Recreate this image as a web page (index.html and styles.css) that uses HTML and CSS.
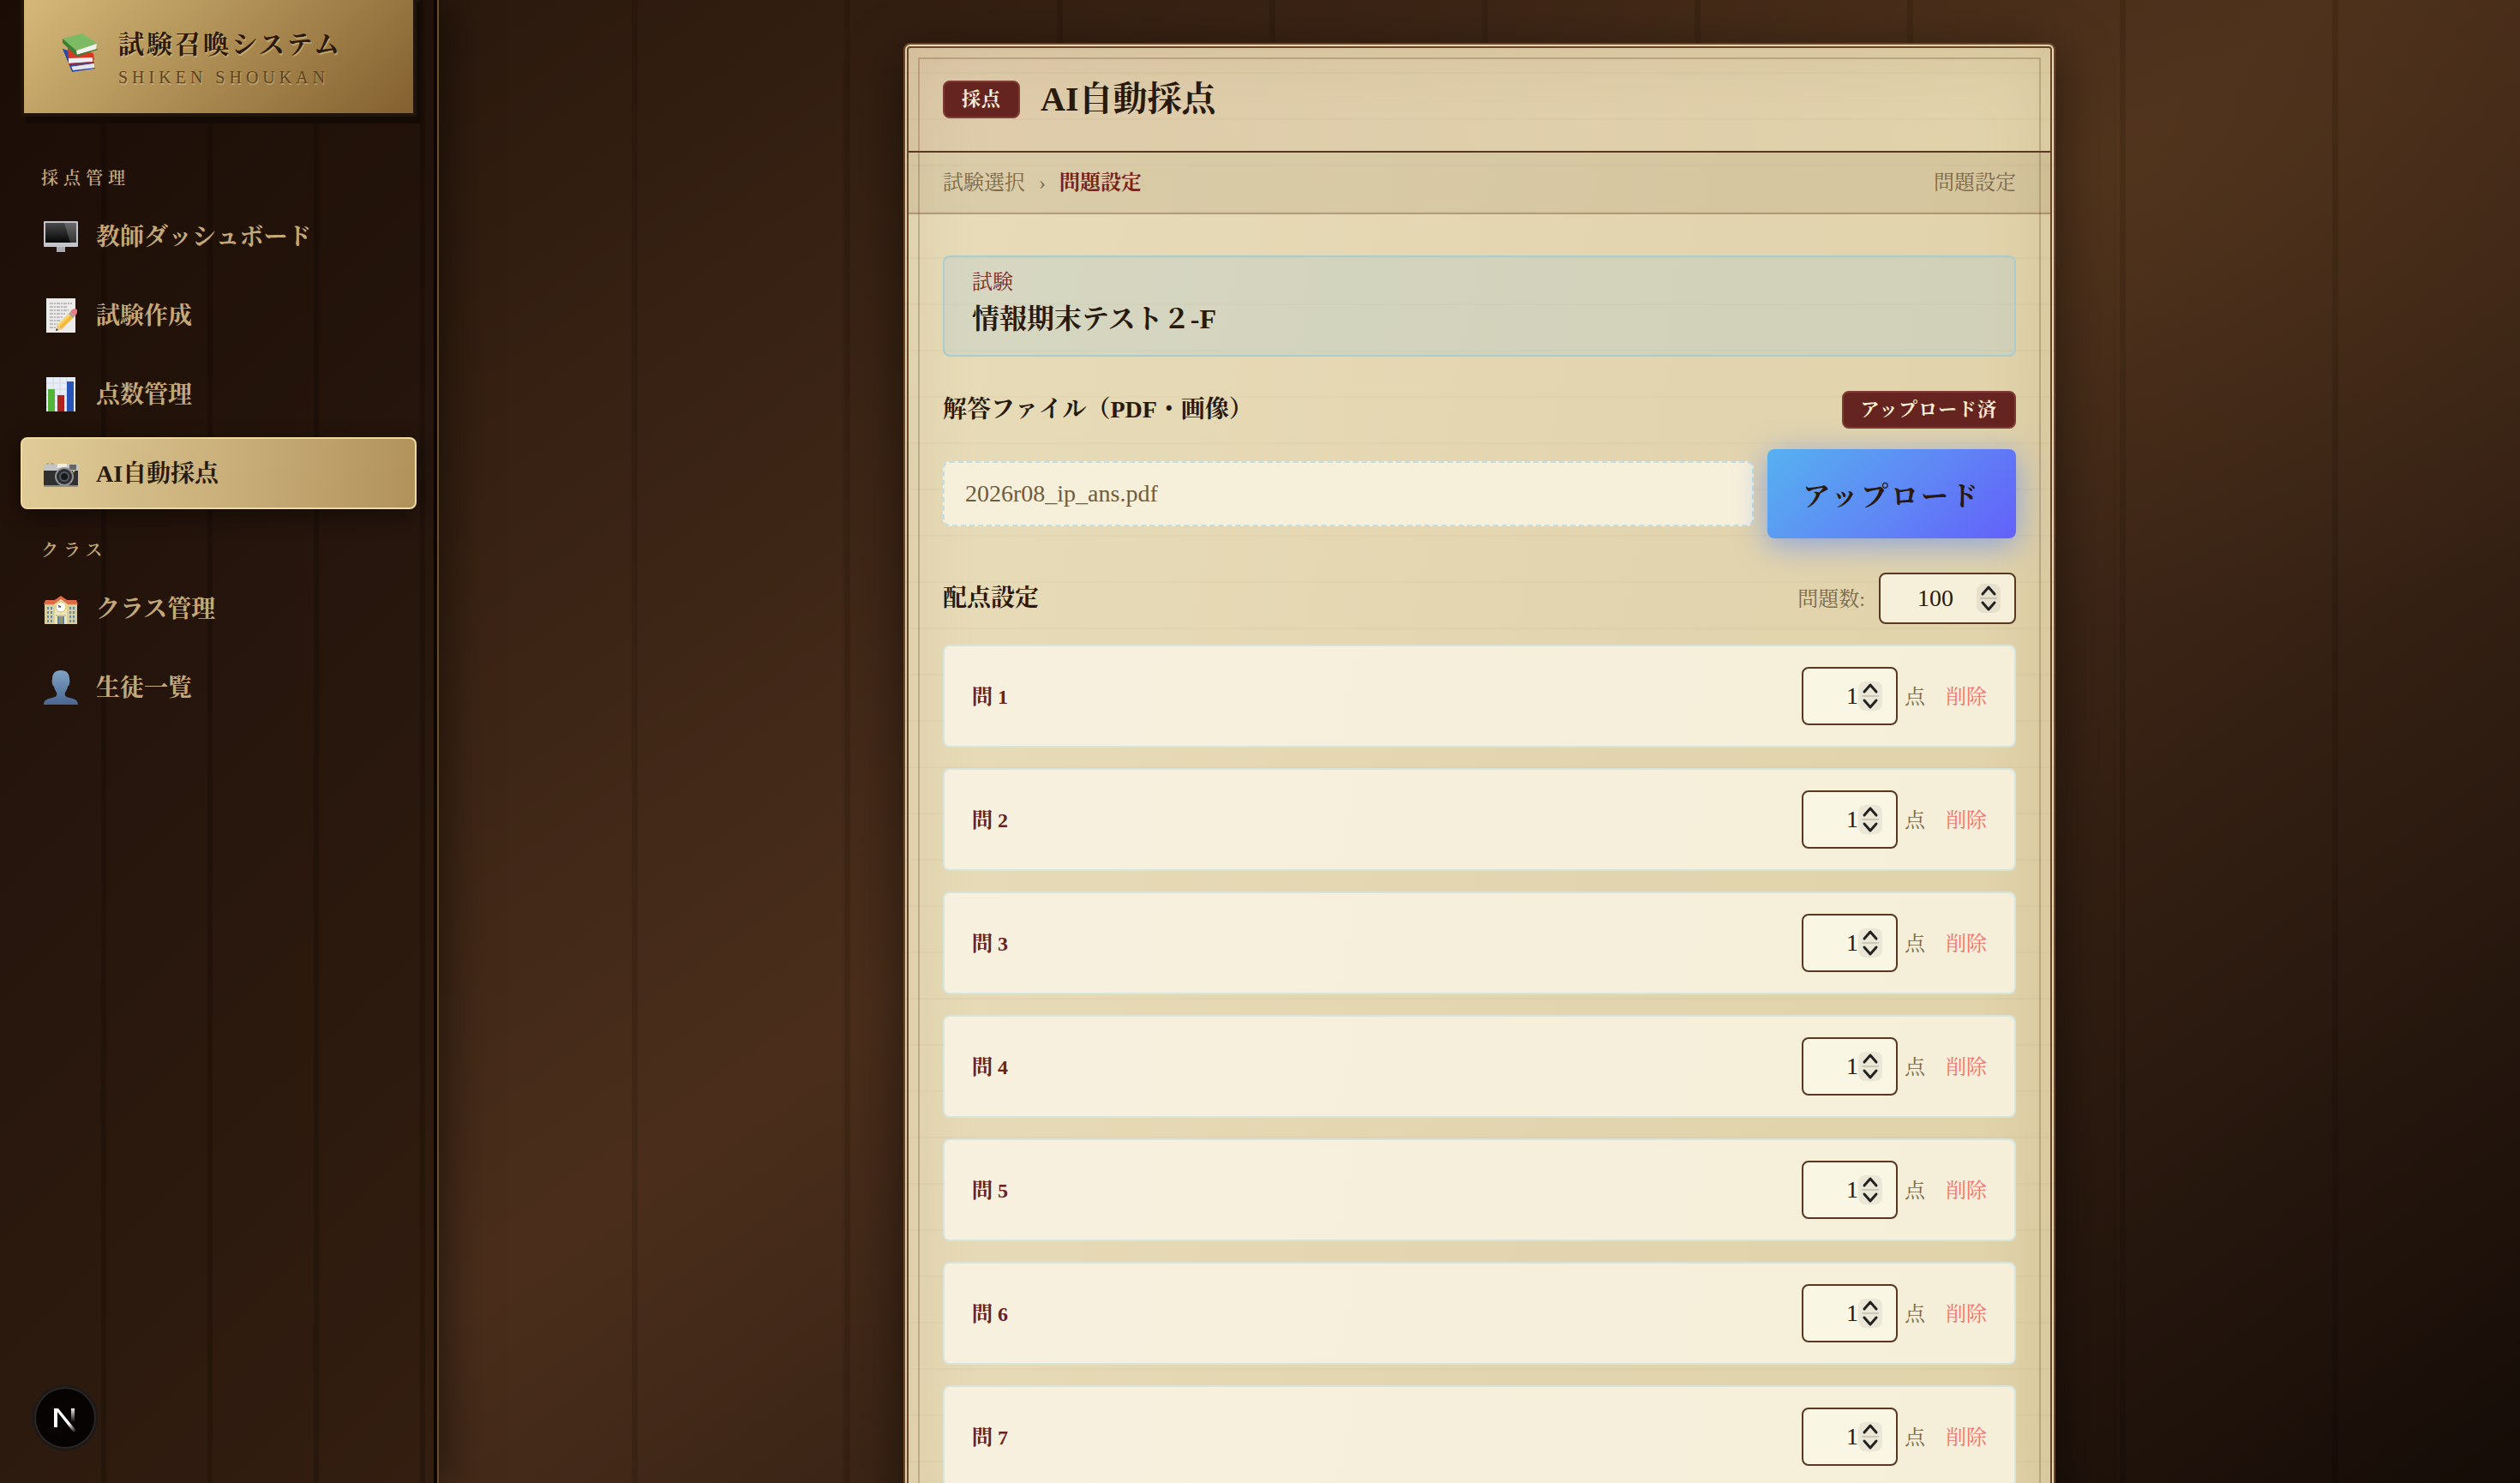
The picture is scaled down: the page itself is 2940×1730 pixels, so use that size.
FILE: index.html
```html
<!DOCTYPE html>
<html lang="ja">
<head>
<meta charset="utf-8">
<meta name="viewport" content="width=device-width, initial-scale=1">
<title>試験召喚システム</title>
<link rel="stylesheet" href="styles.css">
</head>
<body>
<div class="app">
  <aside class="sidebar">
    <div class="brand">
      <svg class="brand-icon" viewBox="0 0 42 46" aria-hidden="true">
        <path d="M1 19l9 21 28-4-3-7z" fill="#2b49a8"/><path d="M10 40l28-4v6l-26 4z" fill="#e4e6ea"/><path d="M1 18l11 28 27-4v-1l-26 3L4 22z" fill="#2845a0"/>
        <path d="M7 18l30 6 1 8-30 3z" fill="#d43a26"/><path d="M8 30l28-1v5l-28 2z" fill="#eceef0"/><path d="M6 17l2 19 29-2v2l-29 1z" fill="#b92b1c"/>
        <path d="M1 7L24 1l18 12-25 8z" fill="#7cbb63"/><path d="M1 7l16 14v6L1 12z" fill="#3d7f34"/><path d="M17 21l24-8-1 6-22 7z" fill="#f1f1ee"/><path d="M17 26l25-7v1l-24 8z" fill="#3d7f34"/>
      </svg>
      <div class="brand-text">
        <span class="brand-title">試験召喚システム</span>
        <span class="brand-sub">SHIKEN SHOUKAN</span>
      </div>
    </div>
    <nav class="nav">
      <section class="nav-group">
        <h2 class="nav-label">採点管理</h2>
        <a class="nav-item" href="#"><svg class="nav-icon" viewBox="0 0 42 42" aria-hidden="true">
          <defs><linearGradient id="scr" x1="0" y1="0" x2="0" y2="1"><stop offset="0" stop-color="#4a4a4a"/><stop offset="1" stop-color="#050505"/></linearGradient></defs>
          <path d="M16 33h10v6H16z" fill="#a9abb0"/><rect x="1" y="3" width="40" height="30" rx="1" fill="#c3c5ca"/><rect x="3" y="5" width="36" height="23" fill="url(#scr)"/><path d="M25 5h14v23h-7z" fill="#fff" opacity=".18"/></svg>教師ダッシュボード</a>
        <a class="nav-item" href="#"><svg class="nav-icon" viewBox="0 0 42 42" aria-hidden="true">
          <rect x="4" y="1" width="34" height="40" fill="#ecebea"/><path d="M8 7h26M8 11h20M8 15h22M8 19h18M8 23h16M8 27h12M8 31h9M8 35h8" stroke="#8b8b8b" stroke-dasharray="4 1 2 1" fill="none"/><path d="M32 17l5 5-15 15-7 2 2-7z" fill="#f2b93a"/><path d="M32 17l2 2-16 16-1-3z" fill="#fbd565"/><path d="M17 32l5 5-7 2z" fill="#e9c9a0"/><path d="M15 39l1-3 2 2z" fill="#333"/><path d="M30 19l2-2 5 5-2 2z" fill="#9ba4ad"/><path d="M32 17c2-4 8-6 8-1 0 3-1 4-3 6z" fill="#e77d86"/></svg>試験作成</a>
        <a class="nav-item" href="#"><svg class="nav-icon" viewBox="0 0 42 42" aria-hidden="true">
          <rect x="4" y="1" width="34" height="40" fill="#e8edf5"/><path d="M4 8h34M4 15h34M4 22h34M4 29h34M4 36h34M12 1v40M20 1v40M28 1v40" stroke="#cfd9e6" fill="none"/><path d="M6 15h8v26H6z" fill="#52b53a"/><path d="M17 22h8v19h-8z" fill="#b0231c"/><path d="M28 6h8v35h-8z" fill="#2756b8"/></svg>点数管理</a>
        <a class="nav-item nav-item-active" href="#" aria-current="page"><svg class="nav-icon" viewBox="0 -2 42 42" aria-hidden="true">
          <path d="M4 7h3v3H4zM9 7h4v3H9z" fill="#c9a877"/><path d="M1 9h40v26H1z" fill="#303030"/><path d="M1 9h40v7H1z" fill="#c4c6c5"/><path d="M17 8h11v5H17z" fill="#f0ede0"/><path d="M31 9h8v6h-8z" fill="#666"/><path d="M1 33h40v2H1z" fill="#8d8d8d"/><circle cx="25" cy="23" r="11" fill="#8f9292"/><circle cx="25" cy="23" r="9" fill="#2b2d30"/><circle cx="25" cy="23" r="6" fill="#555b60"/><circle cx="25" cy="23" r="4" fill="#17191b"/><circle cx="36" cy="17" r="1" fill="#ffd83c"/></svg>AI自動採点</a>
      </section>
      <section class="nav-group">
        <h2 class="nav-label">クラス</h2>
        <a class="nav-item" href="#"><svg class="nav-icon" viewBox="0 -2 42 42" aria-hidden="true">
          <path d="M2 13h38v24H2z" fill="#d8cf9e"/><path d="M14 9l7-4 7 4v28H14z" fill="#eee6bb"/><path d="M3 9h11l7-5 7 5h11l2 5H29l-8-6-8 6H1z" fill="#df6a44"/><circle cx="21" cy="17" r="6" fill="#fff" stroke="#d5b63e"/><path d="M21 17h-3M21 17l-3-2" stroke="#333" fill="none"/><path d="M5 17h2v3H5zM9 17h2v3H9zM5 22h2v3H5zM9 22h2v3H9zM5 27h2v3H5zM9 27h2v3H9zM5 32h2v3H5zM9 32h2v3H9zM31 17h2v3h-2zM35 17h2v3h-2zM31 22h2v3h-2zM35 22h2v3h-2zM31 27h2v3h-2zM35 27h2v3h-2zM31 32h2v3h-2zM35 32h2v3h-2z" fill="#6388a8"/><path d="M17 28h8v9h-8z" fill="#5c86a8"/><path d="M20 28v9M22 28v9" stroke="#c9a742" fill="none"/><path d="M15 26h12v2H15z" fill="#cfc9a5"/></svg>クラス管理</a>
        <a class="nav-item" href="#"><svg class="nav-icon" viewBox="0 0 42 42" aria-hidden="true">
          <defs><linearGradient id="bust" x1="0" y1="0" x2="0" y2="1"><stop offset="0" stop-color="#7fa3c4"/><stop offset="1" stop-color="#4a6691"/></linearGradient></defs>
          <path d="M21 1c-7 0-10 4-10 10 0 2-1 3 0 5 0 2 1 3 2 4 1 4 2 5 3 7 1 4-1 5-5 6-6 1-10 3-10 8h40c0-5-4-7-10-8-4-1-6-2-5-6 1-2 2-3 3-7 1-1 2-2 2-4 1-2 0-3 0-5 0-6-3-10-10-10z" fill="url(#bust)"/></svg>生徒一覧</a>
      </section>
    </nav>
  </aside>

  <main class="main">
    <article class="card">
      <header class="card-head">
        <span class="badge">採点</span>
        <h1 class="card-title">AI自動採点</h1>
      </header>
      <div class="crumbs">
        <ol class="crumb-list"><li>試験選択</li><li aria-hidden="true">›</li><li class="crumb-now">問題設定</li></ol>
        <span>問題設定</span>
      </div>
      <form class="card-body">
        <div class="exam"><span class="exam-label">試験</span><strong class="exam-name">情報期末テスト２-F</strong></div>

        <section class="block">
          <div class="block-head">
            <label class="block-title" for="file">解答ファイル（PDF・画像）</label>
            <span class="badge">アップロード済</span>
          </div>
          <div class="upload">
            <input class="file" id="file" type="text" readonly value="2026r08_ip_ans.pdf">
            <button class="upload-btn" type="button">アップロード</button>
          </div>
        </section>

        <section class="block">
          <div class="block-head">
            <h2 class="block-title">配点設定</h2>
            <div class="count">
              <label class="count-label" for="count">問題数:</label>
              <span class="stepper stepper-wide"><input class="num" id="count" type="number" value="100"><svg class="spin" viewBox="0 0 28 34" aria-hidden="true"><use href="#spin"/></svg></span>
            </div>
          </div>
          <ul class="questions">
            <li class="question"><label class="q-name" for="q1">問 1</label><span class="stepper"><input class="num" id="q1" type="number" value="1"><svg class="spin" viewBox="0 0 28 34" aria-hidden="true"><use href="#spin"/></svg></span><span class="unit">点</span><button class="delete" type="button">削除</button></li>
            <li class="question"><label class="q-name" for="q2">問 2</label><span class="stepper"><input class="num" id="q2" type="number" value="1"><svg class="spin" viewBox="0 0 28 34" aria-hidden="true"><use href="#spin"/></svg></span><span class="unit">点</span><button class="delete" type="button">削除</button></li>
            <li class="question"><label class="q-name" for="q3">問 3</label><span class="stepper"><input class="num" id="q3" type="number" value="1"><svg class="spin" viewBox="0 0 28 34" aria-hidden="true"><use href="#spin"/></svg></span><span class="unit">点</span><button class="delete" type="button">削除</button></li>
            <li class="question"><label class="q-name" for="q4">問 4</label><span class="stepper"><input class="num" id="q4" type="number" value="1"><svg class="spin" viewBox="0 0 28 34" aria-hidden="true"><use href="#spin"/></svg></span><span class="unit">点</span><button class="delete" type="button">削除</button></li>
            <li class="question"><label class="q-name" for="q5">問 5</label><span class="stepper"><input class="num" id="q5" type="number" value="1"><svg class="spin" viewBox="0 0 28 34" aria-hidden="true"><use href="#spin"/></svg></span><span class="unit">点</span><button class="delete" type="button">削除</button></li>
            <li class="question"><label class="q-name" for="q6">問 6</label><span class="stepper"><input class="num" id="q6" type="number" value="1"><svg class="spin" viewBox="0 0 28 34" aria-hidden="true"><use href="#spin"/></svg></span><span class="unit">点</span><button class="delete" type="button">削除</button></li>
            <li class="question"><label class="q-name" for="q7">問 7</label><span class="stepper"><input class="num" id="q7" type="number" value="1"><svg class="spin" viewBox="0 0 28 34" aria-hidden="true"><use href="#spin"/></svg></span><span class="unit">点</span><button class="delete" type="button">削除</button></li>
          </ul>
        </section>
      </form>
    </article>
  </main>
</div>

<button class="dev" type="button" aria-label="Next.js">
  <svg viewBox="-2 -2 76 76" aria-hidden="true">
    <defs>
      <linearGradient id="n1" gradientUnits="userSpaceOnUse" x1="40" y1="43" x2="48" y2="53"><stop offset="0" stop-color="#fff"/><stop offset="1" stop-color="#fff" stop-opacity="0"/></linearGradient>
      <linearGradient id="n2" gradientUnits="userSpaceOnUse" x1="0" y1="24" x2="0" y2="41"><stop offset="0" stop-color="#fff"/><stop offset="1" stop-color="#fff" stop-opacity="0"/></linearGradient>
    </defs>
    <path d="M23 25h5l21 26-3 2-19-24v18h-4z" fill="url(#n1)"/>
    <path d="M43 25h4v16h-4z" fill="url(#n2)"/>
  </svg>
</button>

<svg width="0" height="0" class="sprite" aria-hidden="true">
  <symbol id="spin" viewBox="0 0 28 34">
    <rect width="28" height="34" rx="8" fill="#000" fill-opacity=".06"/>
    <path d="M4 17h20" stroke="#000" stroke-opacity=".13" stroke-width="2"/>
    <path d="M7 12l7-8 7 8M7 22l7 8 7-8" fill="none" stroke="#222" stroke-width="3" stroke-linecap="round" stroke-linejoin="round"/>
  </symbol>
</svg>
</body>
</html>
```

FILE: styles.css
```css
:root {
  --ink: #2a1a0e;
  --brown: #5a3820;
  --muted: #7c6a4a;
  --red: #6b2320;
  --gold: #c4a878;
}

* { box-sizing: border-box; }

body {
  margin: 0;
  color: var(--ink);
  font-family: "Liberation Serif", "Noto Serif CJK JP", "Noto Sans CJK JP", serif;
  font-size: 24px;
  background:
    repeating-linear-gradient(90deg, transparent 0 241px, rgba(0, 0, 0, .12) 241px 248px),
    radial-gradient(ellipse 30% 30% at 85% 12%, rgba(150, 110, 40, .1), transparent),
    linear-gradient(145deg, #23140a 0%, #4a2e1b 50%, #150c07 100%);
}

h1, h2, ol, ul { margin: 0; padding: 0; list-style: none; }
button, input { font: inherit; color: inherit; }

.sprite { position: absolute; }

.app { display: flex; height: 100vh; overflow: hidden; }

/* Sidebar */
.sidebar {
  flex: none;
  width: 512px;
  padding: 0 20px 0 24px;
  border-right: 2px solid #69502b;
  background:
    linear-gradient(#0e0502, #0e0502) right / 4px 100% no-repeat,
    repeating-linear-gradient(90deg, transparent 0 118px, rgba(0, 0, 0, .2) 118px 124px),
    linear-gradient(135deg, #1b0d06 0%, #25150c 45%, #331e10 100%);
  box-shadow: 8px 0 48px rgba(0, 0, 0, .5);
}

.brand {
  display: flex;
  gap: 24px;
  width: 462px;
  height: 142px;
  margin-top: -6px;
  padding: 38px 40px 0 44px;
  border: solid #20140b;
  border-width: 0 4px 4px;
  background: linear-gradient(135deg, #d6b97a 0%, #a8884f 55%, #83602f 100%);
  box-shadow: 6px 8px 0 #150b06;
  text-shadow: 1px 2px 0 rgba(230, 200, 140, .5);
}

.brand-icon { flex: none; width: 42px; height: 46px; margin-top: 6px; }
.brand-text { display: flex; flex-direction: column; gap: 4px; white-space: nowrap; }
.brand-title { font-size: 30px; line-height: 40px; font-weight: 700; letter-spacing: 3px; }
.brand-sub { font-size: 20px; line-height: 28px; letter-spacing: 5px; color: #5d4526; }

.nav { display: flex; flex-direction: column; gap: 32px; width: 462px; padding-top: 56px; }
.nav-group { display: flex; flex-direction: column; gap: 8px; }

.nav-label {
  margin-bottom: 4px;
  padding: 2px 0 0 24px;
  font-size: 20px;
  line-height: 28px;
  font-weight: 600;
  letter-spacing: 6px;
  color: var(--gold);
}

.nav-item {
  display: flex;
  align-items: center;
  gap: 20px;
  height: 84px;
  padding: 0 24px 4px;
  border: 2px solid transparent;
  border-radius: 8px;
  font-size: 28px;
  font-weight: 700;
  color: var(--gold);
  text-decoration: none;
}

.nav-item-active {
  color: var(--ink);
  border-color: #eed99f;
  background: linear-gradient(100deg, #e0cc98 0%, #c8ad78 55%, #b0915a 100%);
  box-shadow: 0 8px 24px rgba(0, 0, 0, .4);
}

.nav-icon { flex: none; width: 42px; height: 42px; margin-top: 4px; }

/* Main card */
.main {
  flex: 1;
  min-width: 0;
  padding: 50px 48px;
  overflow-y: auto;
  scrollbar-width: none;
}

.card {
  position: relative;
  max-width: 1344px;
  margin: 0 auto;
  border: 6px double #6b452a;
  border-radius: 8px;
  background:
    linear-gradient(rgba(120, 90, 40, .04) 0 2px, transparent 2px) 0 28px / 100% 54px,
    linear-gradient(100deg, #e8dcb9 0%, #e2d4ae 60%, #e0d2a8 100%);
  box-shadow: 0 16px 60px rgba(0, 0, 0, .5), inset 0 0 80px rgba(139, 100, 50, .16);
}

.card::after {
  content: "";
  position: absolute;
  inset: 11px;
  border: 2px solid rgba(107, 69, 42, .28);
  pointer-events: none;
}

.card-head {
  display: flex;
  align-items: center;
  gap: 24px;
  height: 122px;
  padding: 0 40px;
  border-bottom: 2px solid var(--brown);
  background: linear-gradient(90deg, rgba(150, 80, 60, .12), rgba(150, 80, 60, 0));
}

.card-title { font-size: 40px; line-height: 56px; font-weight: 700; }

.badge {
  padding: 0 20px;
  border: 2px solid #7f3a33;
  border-radius: 8px;
  background: #662420;
  color: #f8eed2;
  font-size: 22px;
  line-height: 40px;
  font-weight: 700;
  letter-spacing: 1px;
}

.crumbs {
  display: flex;
  justify-content: space-between;
  padding: 0 40px;
  border-bottom: 2px solid rgba(107, 69, 42, .35);
  background: rgba(107, 80, 42, .1);
  line-height: 70px;
  color: var(--muted);
}

.crumb-list { display: flex; gap: 16px; }
.crumb-now { color: #76231c; font-weight: 700; }

.card-body { display: flex; flex-direction: column; gap: 40px; padding: 48px 40px; }

.exam {
  display: flex;
  flex-direction: column;
  gap: 4px;
  padding: 14px 32px 18px;
  border: 2px solid #a9ccce;
  border-radius: 8px;
  background: rgba(176, 205, 215, .32);
}

.exam-label { line-height: 30px; color: #7b2c26; }
.exam-name { font-size: 32px; line-height: 48px; }

.block { display: flex; flex-direction: column; gap: 24px; }
.block-head { display: flex; align-items: center; justify-content: space-between; }
.block-title { font-size: 28px; line-height: 40px; font-weight: 700; }

.upload { display: flex; align-items: center; gap: 16px; }

.file {
  flex: 1;
  min-width: 0;
  height: 76px;
  padding: 0 24px;
  border: 2px dashed #c0dfe4;
  border-radius: 8px;
  background: #f6efda;
  color: #705c3c;
  font-size: 28px;
}

.upload-btn {
  height: 104px;
  padding: 0 41px;
  border: 0;
  border-radius: 8px;
  background: linear-gradient(135deg, #56b1f0 0%, #5f86f5 55%, #6360fa 100%);
  box-shadow: 0 8px 36px rgba(80, 130, 255, .6);
  font-size: 32px;
  font-weight: 700;
  letter-spacing: 3px;
}

.count { display: flex; align-items: center; gap: 16px; color: var(--muted); }

.stepper { position: relative; display: flex; width: 112px; height: 68px; }
.stepper-wide { width: 160px; height: 60px; }

.num {
  width: 100%;
  padding: 0 44px 0 16px;
  border: 2px solid var(--brown);
  border-radius: 8px;
  background: #faf6e4;
  color: var(--ink);
  font-size: 28px;
  text-align: right;
  appearance: textfield;
}

.num::-webkit-inner-spin-button { appearance: none; }
.stepper-wide .num { padding: 0 44px 0 16px; background: #f6efda; text-align: center; }

.spin {
  position: absolute;
  top: 50%;
  right: 18px;
  width: 28px;
  height: 34px;
  margin-top: -17px;
  pointer-events: none;
}

.questions { display: flex; flex-direction: column; gap: 24px; }

.question {
  display: flex;
  align-items: center;
  height: 120px;
  padding: 0 32px;
  border: 2px solid #d5e5dc;
  border-radius: 8px;
  background: linear-gradient(100deg, #f7f0de, #f5eed8);
}

.q-name { flex: 1; font-weight: 700; color: var(--red); }
.unit { margin: 0 24px 0 8px; color: var(--muted); }
.delete { padding: 0; border: 0; background: none; color: #ef7672; }
.count-label, .q-name, .unit, .delete { padding-bottom: 4px; }

/* Framework dev indicator, fixed in the corner */
.dev {
  position: fixed;
  left: 38px;
  bottom: 38px;
  width: 76px;
  height: 76px;
  padding: 0;
  border: 0;
  border-radius: 50%;
  background: #060302;
  box-shadow: inset 0 0 0 2px #1b1a19, inset 0 0 0 4px #2a2625;
}

.dev svg { display: block; width: 76px; height: 76px; }
```
